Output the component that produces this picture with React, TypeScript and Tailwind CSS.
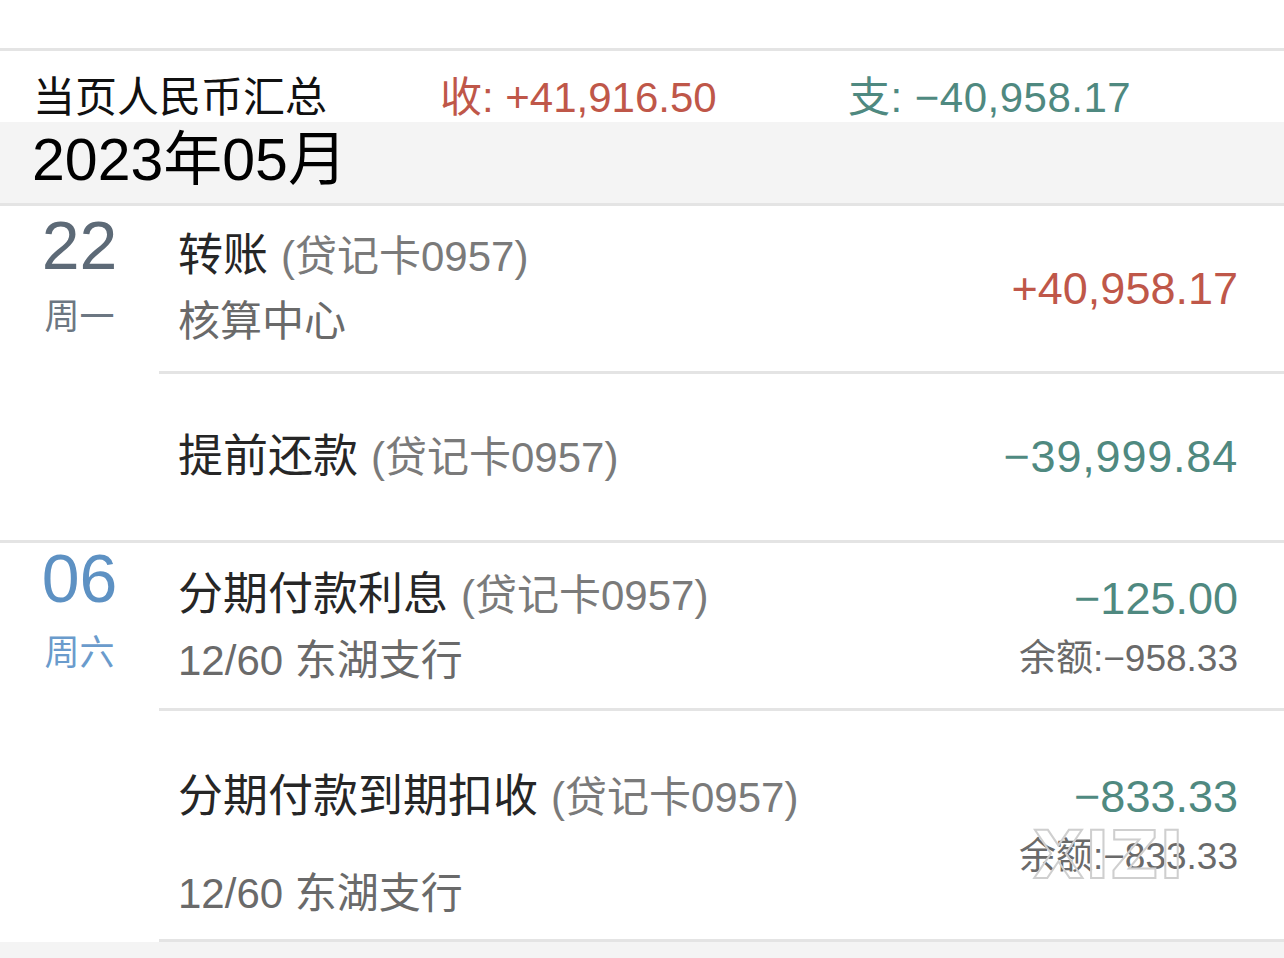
import React from "react";

const FONT = "font-['Liberation_Sans','Noto_Sans_CJK_SC',sans-serif]";

function Title({ main }: { main: string }) {
  return (
    <div className="flex items-baseline whitespace-nowrap leading-[52px]">
      <span className="text-[45px] text-[#262626]">{main}</span>
      <span className="ml-[13px] text-[42px] text-[#7a7a7a]">(贷记卡0957)</span>
    </div>
  );
}

export default function App() {
  return (
    <div className={`${FONT} w-[1284px] h-[958px] overflow-hidden bg-white`}>
      <div className="h-[48px] bg-white" />
      <div className="h-[3px] bg-[#e4e4e4]" />
      {/* summary */}
      <div className="h-[71px] flex items-start pt-[24px] pl-[33px] text-[42px] leading-[46px] whitespace-nowrap">
        <div className="w-[407px] text-[#111]">当页人民币汇总</div>
        <div className="w-[408px] text-[#bf5749]">收: +41,916.50</div>
        <div className="text-[#4f8980] tracking-[0.5px]">支: −40,958.17</div>
      </div>
      {/* month band */}
      <div className="h-[81px] bg-[#f4f4f4] flex items-center pl-[32px] pb-[6px]">
        <span className="text-[59px] leading-[64px] text-black">2023年05月</span>
      </div>
      <div className="h-[3px] bg-[#e4e4e4]" />

      {/* group 22 */}
      <div className="flex">
        <div className="w-[159px] flex flex-col items-center pt-[1px]">
          <div className="text-[68px] leading-[76px] text-[#5d6a77]">22</div>
          <div className="text-[35px] leading-[40px] mt-[14px] text-[#6c7782]">周一</div>
        </div>
        <div className="flex-1">
          <div className="h-[165px] flex items-center pr-[46px]">
            <div className="flex-1 flex flex-col pl-[19px]">
              <Title main="转账" />
              <div className="text-[42px] leading-[52px] mt-[13px] text-[#6a6a6a]">核算中心</div>
            </div>
            <div className="text-[45px] leading-[52px] text-[#bf5749]">+40,958.17</div>
          </div>
          <div className="h-[3px] bg-[#e4e4e4]" />
          <div className="h-[166px] flex items-center pr-[46px]">
            <div className="flex-1 pl-[19px]">
              <Title main="提前还款" />
            </div>
            <div className="text-[45px] leading-[52px] text-[#4f8980] tracking-[0.8px]">−39,999.84</div>
          </div>
        </div>
      </div>
      <div className="h-[3px] bg-[#e4e4e4]" />

      {/* group 06 */}
      <div className="flex">
        <div className="w-[159px] flex flex-col items-center">
          <div className="text-[68px] leading-[76px] text-[#5d91c3] -mt-[3px]">06</div>
          <div className="text-[35px] leading-[40px] mt-[17px] text-[#6a9bcc]">周六</div>
        </div>
        <div className="flex-1">
          <div className="h-[165px] flex items-center pr-[46px]">
            <div className="flex-1 flex flex-col pl-[19px] pt-[4px]">
              <Title main="分期付款利息" />
              <div className="text-[42px] leading-[52px] mt-[13px] text-[#6a6a6a]">12/60 东湖支行</div>
            </div>
            <div className="flex flex-col items-end pt-[2px]">
              <div className="text-[45px] leading-[52px] text-[#4f8980]">−125.00</div>
              <div className="text-[37px] leading-[44px] mt-[12px] text-[#6a6a6a]">余额:−958.33</div>
            </div>
          </div>
          <div className="h-[3px] bg-[#e4e4e4]" />
          <div className="relative h-[228px] flex items-start pr-[46px] pt-[60px]">
            <div className="flex-1 flex flex-col pl-[19px]">
              <Title main="分期付款到期扣收" />
              <div className="text-[42px] leading-[52px] mt-[44px] text-[#6a6a6a]">12/60 东湖支行</div>
            </div>
            <div className="flex flex-col items-end">
              <div className="text-[45px] leading-[52px] text-[#4f8980]">−833.33</div>
              <div className="text-[37px] leading-[44px] mt-[12px] text-[#6a6a6a]">余额:−833.33</div>
            </div>
            <div className="absolute left-[874px] top-[112px] text-[66px] leading-[66px] font-bold tracking-[1px] text-transparent [-webkit-text-stroke:2px_#cfcfcf] font-['DejaVu_Sans',sans-serif]">
              XIZI
            </div>
          </div>
          <div className="h-[3px] bg-[#e4e4e4]" />
        </div>
      </div>
      <div className="h-[40px] bg-[#f4f4f4]" />
    </div>
  );
}
